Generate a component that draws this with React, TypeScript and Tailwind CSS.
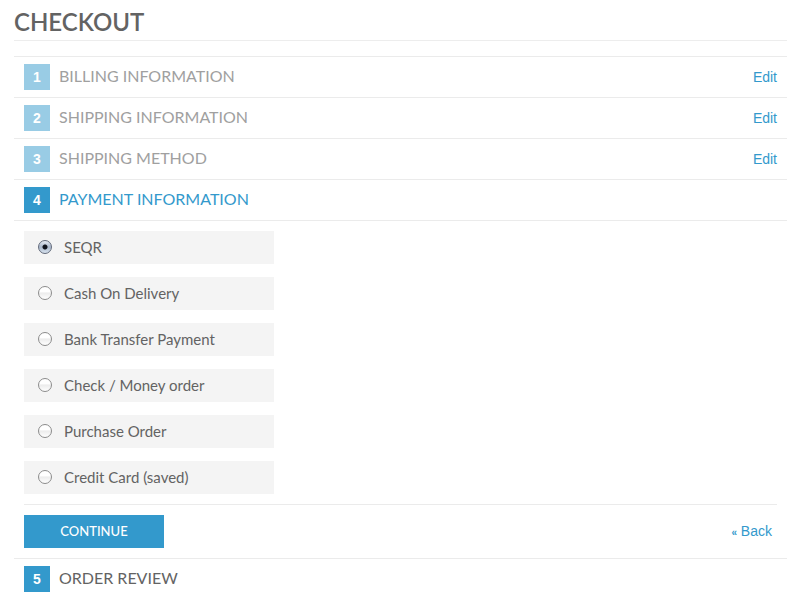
import { useState } from "react";

type StepState = "done" | "active" | "upcoming";

const titleColors: Record<StepState, string> = {
  done: "text-[#a0a0a0]",
  active: "text-[#3399cc]",
  upcoming: "text-[#636363]",
};

const methods = [
  "SEQR",
  "Cash On Delivery",
  "Bank Transfer Payment",
  "Check / Money order",
  "Purchase Order",
  "Credit Card (saved)",
];

function StepHeader({ number, title, state }: { number: number; title: string; state: StepState }) {
  return (
    <div className="flex h-10 items-center px-2.5">
      <span
        className={`flex size-[26px] items-center justify-center font-['Liberation_Sans',Arial,sans-serif] text-sm font-bold text-white ${
          state === "done" ? "bg-[#99cce5]" : "bg-[#3399cc]"
        }`}
      >
        {number}
      </span>
      <h2 className={`ml-[9px] pb-0.5 text-base leading-6 uppercase ${titleColors[state]}`}>{title}</h2>
      {state === "done" && (
        <a
          href="#edit"
          aria-label={`Edit ${title}`}
          className="ml-auto font-['Liberation_Sans',Arial,sans-serif] text-sm text-[#3399cc]"
        >
          Edit
        </a>
      )}
    </div>
  );
}

export default function App() {
  const [method, setMethod] = useState("SEQR");

  return (
    <main className="bg-white pr-[13px] pb-3 pl-3.5 font-[Lato,sans-serif] text-[#636363]">
      <h1 className="border-b border-[#ededed] pt-2 pb-1 text-2xl leading-7 font-semibold uppercase">
        Checkout
      </h1>
      <ol className="mt-[15px]">
        <li className="border-t border-[#ebebeb]">
          <StepHeader number={1} title="Billing Information" state="done" />
        </li>
        <li className="border-t border-[#ebebeb]">
          <StepHeader number={2} title="Shipping Information" state="done" />
        </li>
        <li className="border-t border-[#ebebeb]">
          <StepHeader number={3} title="Shipping Method" state="done" />
        </li>
        <li className="border-t border-[#ebebeb]">
          <StepHeader number={4} title="Payment Information" state="active" />
          <form
            className="border-t border-[#ebebeb] p-2.5"
            onSubmit={(event) => event.preventDefault()}
          >
            <div role="radiogroup" aria-label="Payment method" className="flex flex-col gap-[13px]">
              {methods.map((name) => (
                <label
                  key={name}
                  className="flex h-[33px] w-[250px] items-center bg-[#f4f4f4] pb-0.5 pl-3.5 text-[15px] leading-5"
                >
                  <input
                    type="radio"
                    name="payment"
                    value={name}
                    checked={method === name}
                    onChange={() => setMethod(name)}
                    className="size-3.5 appearance-none rounded-full border border-[#8c8c8c] bg-linear-to-b from-white from-40% via-[#ececec] via-50% to-white checked:border-[#626a7a] checked:bg-[radial-gradient(circle,#10131c_0_2px,transparent_3px),linear-gradient(#e6ebf3,#a9b6ca_50%,#d8e3ef)]"
                  />
                  <span className="ml-3">{name}</span>
                </label>
              ))}
            </div>
            <div className="mt-2.5 flex items-center justify-between border-t border-[#ebebeb] pt-2.5">
              <button
                type="submit"
                className="h-[33px] w-[140px] bg-[#3399cc] text-[13px] font-medium text-white uppercase"
              >
                Continue
              </button>
              <a
                href="#back"
                className="mr-[5px] pb-0.5 font-['Liberation_Sans',Arial,sans-serif] text-sm text-[#3399cc]"
              >
                <small className="text-[10px] font-bold">«</small> Back
              </a>
            </div>
          </form>
        </li>
        <li className="border-t border-[#ebebeb]">
          <StepHeader number={5} title="Order Review" state="upcoming" />
        </li>
      </ol>
    </main>
  );
}
